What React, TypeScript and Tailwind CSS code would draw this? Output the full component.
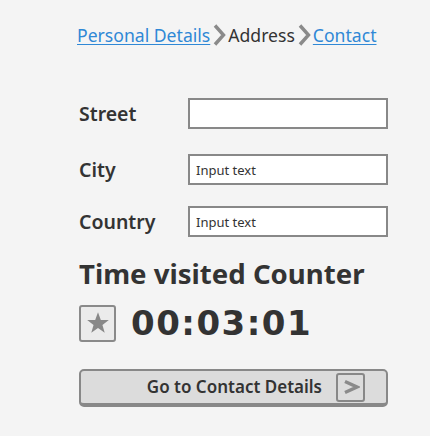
import React from "react";

const Chevron = () => (
  <svg width="16" height="24" viewBox="0 0 16 24" className="mx-[1px]">
    <polyline points="4,2.5 12.5,12 4,21.5" fill="none" stroke="#8a8a8a" strokeWidth="3.4" strokeLinejoin="miter" />
  </svg>
);

export default function App() {
  return (
    <div className="w-[430px] h-[436px] bg-[#f4f4f4] text-[#333333] font-['Noto_Sans',sans-serif] overflow-hidden">
      <div className="flex items-center pl-[77px] pt-[23px] text-[17.6px] leading-[24px]">
        <a href="#" className="text-[#2f88d6] underline underline-offset-2 decoration-1">Personal Details</a>
        <Chevron />
        <span className="text-[#333333]">Address</span>
        <Chevron />
        <a href="#" className="text-[#2f88d6] underline underline-offset-2 decoration-1">Contact</a>
      </div>

      <div className="pl-[79px] pr-[42px] pt-[51px] flex flex-col">
        <div className="flex items-center h-[31px]">
          <label className="w-[110px] text-[19.5px] font-semibold">Street</label>
          <input className="w-[200px] h-[31px] bg-white border-2 border-[#888888] px-[6px] text-[13px] outline-none" />
        </div>
        <div className="flex items-center h-[31px] mt-[25px]">
          <label className="w-[110px] text-[19.5px] font-semibold">City</label>
          <input placeholder="Input text" className="w-[200px] h-[31px] bg-white border-2 border-[#888888] px-[6px] text-[13px] placeholder:text-[#333333] outline-none" />
        </div>
        <div className="flex items-center h-[31px] mt-[21px]">
          <label className="w-[110px] text-[19.5px] font-semibold">Country</label>
          <input placeholder="Input text" className="w-[200px] h-[31px] bg-white border-2 border-[#888888] px-[6px] text-[13px] placeholder:text-[#333333] outline-none" />
        </div>

        <h2 className="mt-[18px] text-[27.6px] font-bold leading-[36px]">Time visited Counter</h2>

        <div className="flex items-center mt-[12px]">
          <div className="w-[37px] h-[37px] border-2 border-[#8a8a8a] rounded-[3px] bg-[#ebebeb] flex items-center justify-center">
            <svg width="26" height="26" viewBox="0 0 24 24">
              <polygon points="12,2 14.6,9.2 22,9.3 16.1,13.8 18.2,21 12,16.7 5.8,21 7.9,13.8 2,9.3 9.4,9.2" fill="#888888" />
            </svg>
          </div>
          <span className="ml-[15px] text-[34px] font-bold leading-[40px] tracking-[1.5px] font-['DejaVu_Sans',sans-serif] text-[#333333]">00:03:01</span>
        </div>

        <button className="mt-[26px] w-[309px] h-[38px] bg-[#dcdcdc] border-2 border-b-4 border-[#888888] rounded-[5px] flex items-center justify-end pr-[21px]">
          <span className="text-[17px] font-semibold text-[#333333] mr-[14px]">Go to Contact Details</span>
          <span className="w-[29px] h-[29px] border-2 border-[#888888] rounded-[3px] flex items-center justify-center">
            <svg width="18" height="16" viewBox="0 0 18 16">
              <polyline points="3,2.5 15,8 3,13.5" fill="none" stroke="#8a8a8a" strokeWidth="3.4" />
            </svg>
          </span>
        </button>
      </div>
    </div>
  );
}
